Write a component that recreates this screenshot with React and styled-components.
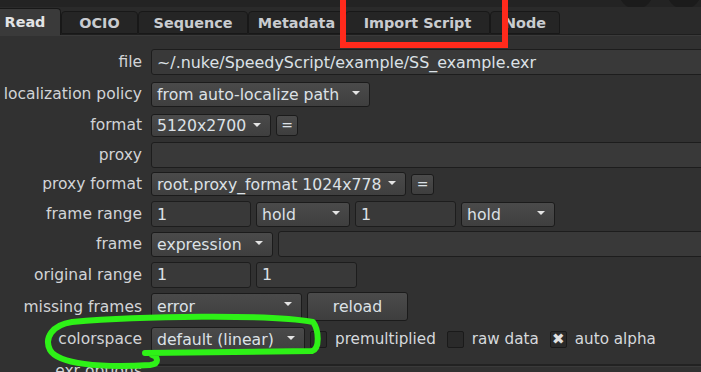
import React from "react";
import styled, { createGlobalStyle } from "styled-components";

const GlobalStyle = createGlobalStyle`
  html, body {
    margin: 0;
    padding: 0;
    background: #313131;
  }
  body {
    font-family: "DejaVu Sans", Verdana, sans-serif;
  }
`;

const Page = styled.div`
  position: relative;
  width: 701px;
  height: 372px;
  overflow: hidden;
  background: #313131;
  color: #d6d9dd;
`;

const TopStrip = styled.div`
  height: 7px;
  background: #232323;
  display: flex;
  align-items: flex-end;
  justify-content: flex-end;
  gap: 14px;
  overflow: hidden;
`;

const Knob = styled.div`
  width: 34px;
  height: 34px;
  border-radius: 50%;
  background: #1b1b1b;
  margin-bottom: -2px;
  flex: none;
`;

const TabBar = styled.div`
  display: flex;
  align-items: flex-end;
  height: 27px;
  background: #2a2a2a;
  border-bottom: 1px solid #1e1e1e;
`;

const Tab = styled.div`
  display: flex;
  align-items: center;
  justify-content: center;
  flex: none;
  width: ${(p) => p.$w}px;
  height: ${(p) => (p.$active ? 27 : 23)}px;
  margin-left: ${(p) => p.$ml || 0}px;
  box-sizing: border-box;
  font-size: 14.4px;
  font-weight: bold;
  color: ${(p) => (p.$active ? "#e2e4e6" : "#c9ccd0")};
  background: ${(p) => (p.$active ? "#3a3a3a" : "#252525")};
  border: 1px solid #181818;
  border-bottom: ${(p) => (p.$active ? "none" : "1px solid #181818")};
  border-radius: 4px 4px 0 0;
  margin-bottom: ${(p) => (p.$active ? -1 : 0)}px;
`;

const Panel = styled.div`
  padding-top: 10px;
  border-top: 1px solid #3a3a3a;
`;

const Row = styled.div`
  display: flex;
  align-items: center;
  gap: 5px;
  height: ${(p) => p.$h}px;
`;

const Label = styled.div`
  flex: none;
  width: 142px;
  margin-right: 4px;
  text-align: right;
  font-size: 15.5px;
  color: #d2d4d7;
  white-space: nowrap;
`;

const Field = styled.div`
  box-sizing: border-box;
  display: flex;
  align-items: center;
  height: ${(p) => p.$h || 26}px;
  width: ${(p) => (p.$w ? `${p.$w}px` : "auto")};
  flex: ${(p) => (p.$w ? "none" : "1")};
  margin-right: ${(p) => (p.$w ? 0 : -10)}px;
  padding-left: 5px;
  background: #393939;
  border: 1px solid #1d1d1d;
  border-radius: 3px;
  font-size: 15.9px;
  color: #dce1e6;
  white-space: nowrap;
  overflow: hidden;
`;

const Select = styled.div`
  box-sizing: border-box;
  position: relative;
  display: flex;
  align-items: center;
  flex: none;
  height: ${(p) => p.$h || 25}px;
  width: ${(p) => p.$w}px;
  padding-left: 5px;
  background: linear-gradient(#4a4a4a, #3f3f3f);
  border: 1px solid #1b1b1b;
  border-radius: 3px;
  font-size: 15.7px;
  color: #dce1e6;
  white-space: nowrap;
  &::after {
    content: "";
    position: absolute;
    right: 9px;
    top: 8px;
    border-left: 4px solid transparent;
    border-right: 4px solid transparent;
    border-top: 4px solid #e4e4e4;
  }
`;

const Button = styled.div`
  box-sizing: border-box;
  display: flex;
  align-items: center;
  justify-content: center;
  flex: none;
  height: ${(p) => p.$h || 26}px;
  width: ${(p) => p.$w}px;
  background: linear-gradient(#4b4b4b, #3e3e3e);
  border: 1px solid #1b1b1b;
  border-radius: 3px;
  font-size: ${(p) => p.$fs || 15.7}px;
  color: #dce1e6;
`;

const Check = styled.div`
  box-sizing: border-box;
  flex: none;
  width: 17px;
  height: 17px;
  margin-left: ${(p) => p.$ml || 0}px;
  display: flex;
  align-items: center;
  justify-content: center;
  background: #2a2a2a;
  border: 1px solid #1a1a1a;
  border-radius: 2px;
  font-size: 15px;
  line-height: 1;
  color: #e0e0e0;
`;

const CheckText = styled.span`
  font-size: 15.2px;
  color: #d6d9dd;
  margin-left: 3px;
  white-space: nowrap;
`;

const Rule = styled.div`
  flex: 1;
  align-self: flex-start;
  margin-top: 9px;
  height: 2px;
  margin-right: -10px;
  background: #222;
  border-bottom: 1px solid #3a3a3a;
`;

const RedBox = styled.div`
  position: absolute;
  left: 340px;
  top: -6px;
  width: 168px;
  height: 54px;
  box-sizing: border-box;
  border: 6px solid #ff2a1c;
  pointer-events: none;
`;

const Scribble = styled.svg`
  position: absolute;
  left: 0;
  top: 0;
  pointer-events: none;
`;

const tabs = [
  { name: "Read", w: 72, ml: -11, active: true },
  { name: "OCIO", w: 77 },
  { name: "Sequence", w: 110 },
  { name: "Metadata", w: 97 },
  { name: "Import Script", w: 145 },
  { name: "Node", w: 70 },
];

export default function App() {
  return (
    <Page>
      <GlobalStyle />
      <TopStrip>
        <Knob />
        <Knob />
      </TopStrip>
      <TabBar>
        {tabs.map((t) => (
          <Tab key={t.name} $w={t.w} $ml={t.ml} $active={t.active}>
            {t.name}
          </Tab>
        ))}
      </TabBar>
      <Panel>
        <Row $h={32}>
          <Label>file</Label>
          <Field>~/.nuke/SpeedyScript/example/SS_example.exr</Field>
        </Row>
        <Row $h={32}>
          <Label>localization policy</Label>
          <Select $w={219}>from auto-localize path</Select>
        </Row>
        <Row $h={30}>
          <Label>format</Label>
          <Select $w={120} $h={23}>5120x2700</Select>
          <Button $w={22} $h={21} $fs={14}>=</Button>
        </Row>
        <Row $h={29}>
          <Label>proxy</Label>
          <Field />
        </Row>
        <Row $h={30}>
          <Label>proxy format</Label>
          <Select $w={255} $h={24}>root.proxy_format 1024x778</Select>
          <Button $w={23} $h={21} $fs={14}>=</Button>
        </Row>
        <Row $h={30}>
          <Label>frame range</Label>
          <Field $w={100}>1</Field>
          <Select $w={94}>hold</Select>
          <Field $w={101}>1</Field>
          <Select $w={94}>hold</Select>
        </Row>
        <Row $h={30}>
          <Label>frame</Label>
          <Select $w={122}>expression</Select>
          <Field />
        </Row>
        <Row $h={31}>
          <Label>original range</Label>
          <Field $w={100}>1</Field>
          <Field $w={101}>1</Field>
        </Row>
        <Row $h={33}>
          <Label>missing frames</Label>
          <Select $w={151} $h={27}>error</Select>
          <Button $w={101} $h={29}>reload</Button>
        </Row>
        <Row $h={32}>
          <Label>colorspace</Label>
          <Select $w={154}>default (linear)</Select>
          <Check>{""}</Check>
          <CheckText>premultiplied</CheckText>
          <Check $ml={6}>{""}</Check>
          <CheckText>raw data</CheckText>
          <Check $ml={6}>✖</Check>
          <CheckText>auto alpha</CheckText>
        </Row>
        <Row $h={32}>
          <Label>exr options</Label>
          <Rule />
        </Row>
      </Panel>
      <RedBox />
      <Scribble width="701" height="372" viewBox="0 0 701 372">
        <path
          d="M 145 353 L 312 351 C 320 349, 319 330, 313 322 C 270 314, 140 316, 72 322 C 52 325, 44 338, 50 350 C 58 364, 100 368, 150 365 C 160 364, 158 356, 152 355"
          fill="none"
          stroke="#2ef117"
          strokeWidth="6"
          strokeLinecap="round"
          strokeLinejoin="round"
        />
      </Scribble>
    </Page>
  );
}
